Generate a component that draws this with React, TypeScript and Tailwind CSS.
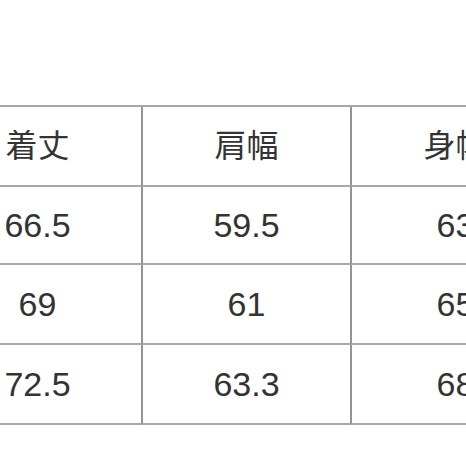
import React from "react";

const rows = [
  { h: "h-[80px]", t: "text-[32px]", cells: ["着丈", "肩幅", "身幅"] },
  { h: "h-[78px]", t: "text-[34px]", cells: ["66.5", "59.5", "63"] },
  { h: "h-[80px]", t: "text-[34px]", cells: ["69", "61", "65"] },
  { h: "h-[80px]", t: "text-[34px]", cells: ["72.5", "63.3", "68"] },
];

export default function App() {
  return (
    <div className="w-[466px] h-[466px] overflow-hidden bg-white pt-[105px]">
      <div
        className="ml-[-66px] w-[627px] border-t-2 border-[#a8a8a8] text-[#333333]"
        style={{ fontFamily: '"Liberation Sans", "Noto Sans CJK JP", sans-serif' }}
      >
        {rows.map((r, i) => (
          <div key={i} className={`flex ${r.t}`}>
            {r.cells.map((c, j) => (
              <div
                key={j}
                className={`${r.h} w-[209px] shrink-0 flex items-center justify-center border-b-2 border-r-2 border-b-[#a8a8a8] border-r-[#949494] leading-none`}
              >
                {c}
              </div>
            ))}
          </div>
        ))}
      </div>
    </div>
  );
}
